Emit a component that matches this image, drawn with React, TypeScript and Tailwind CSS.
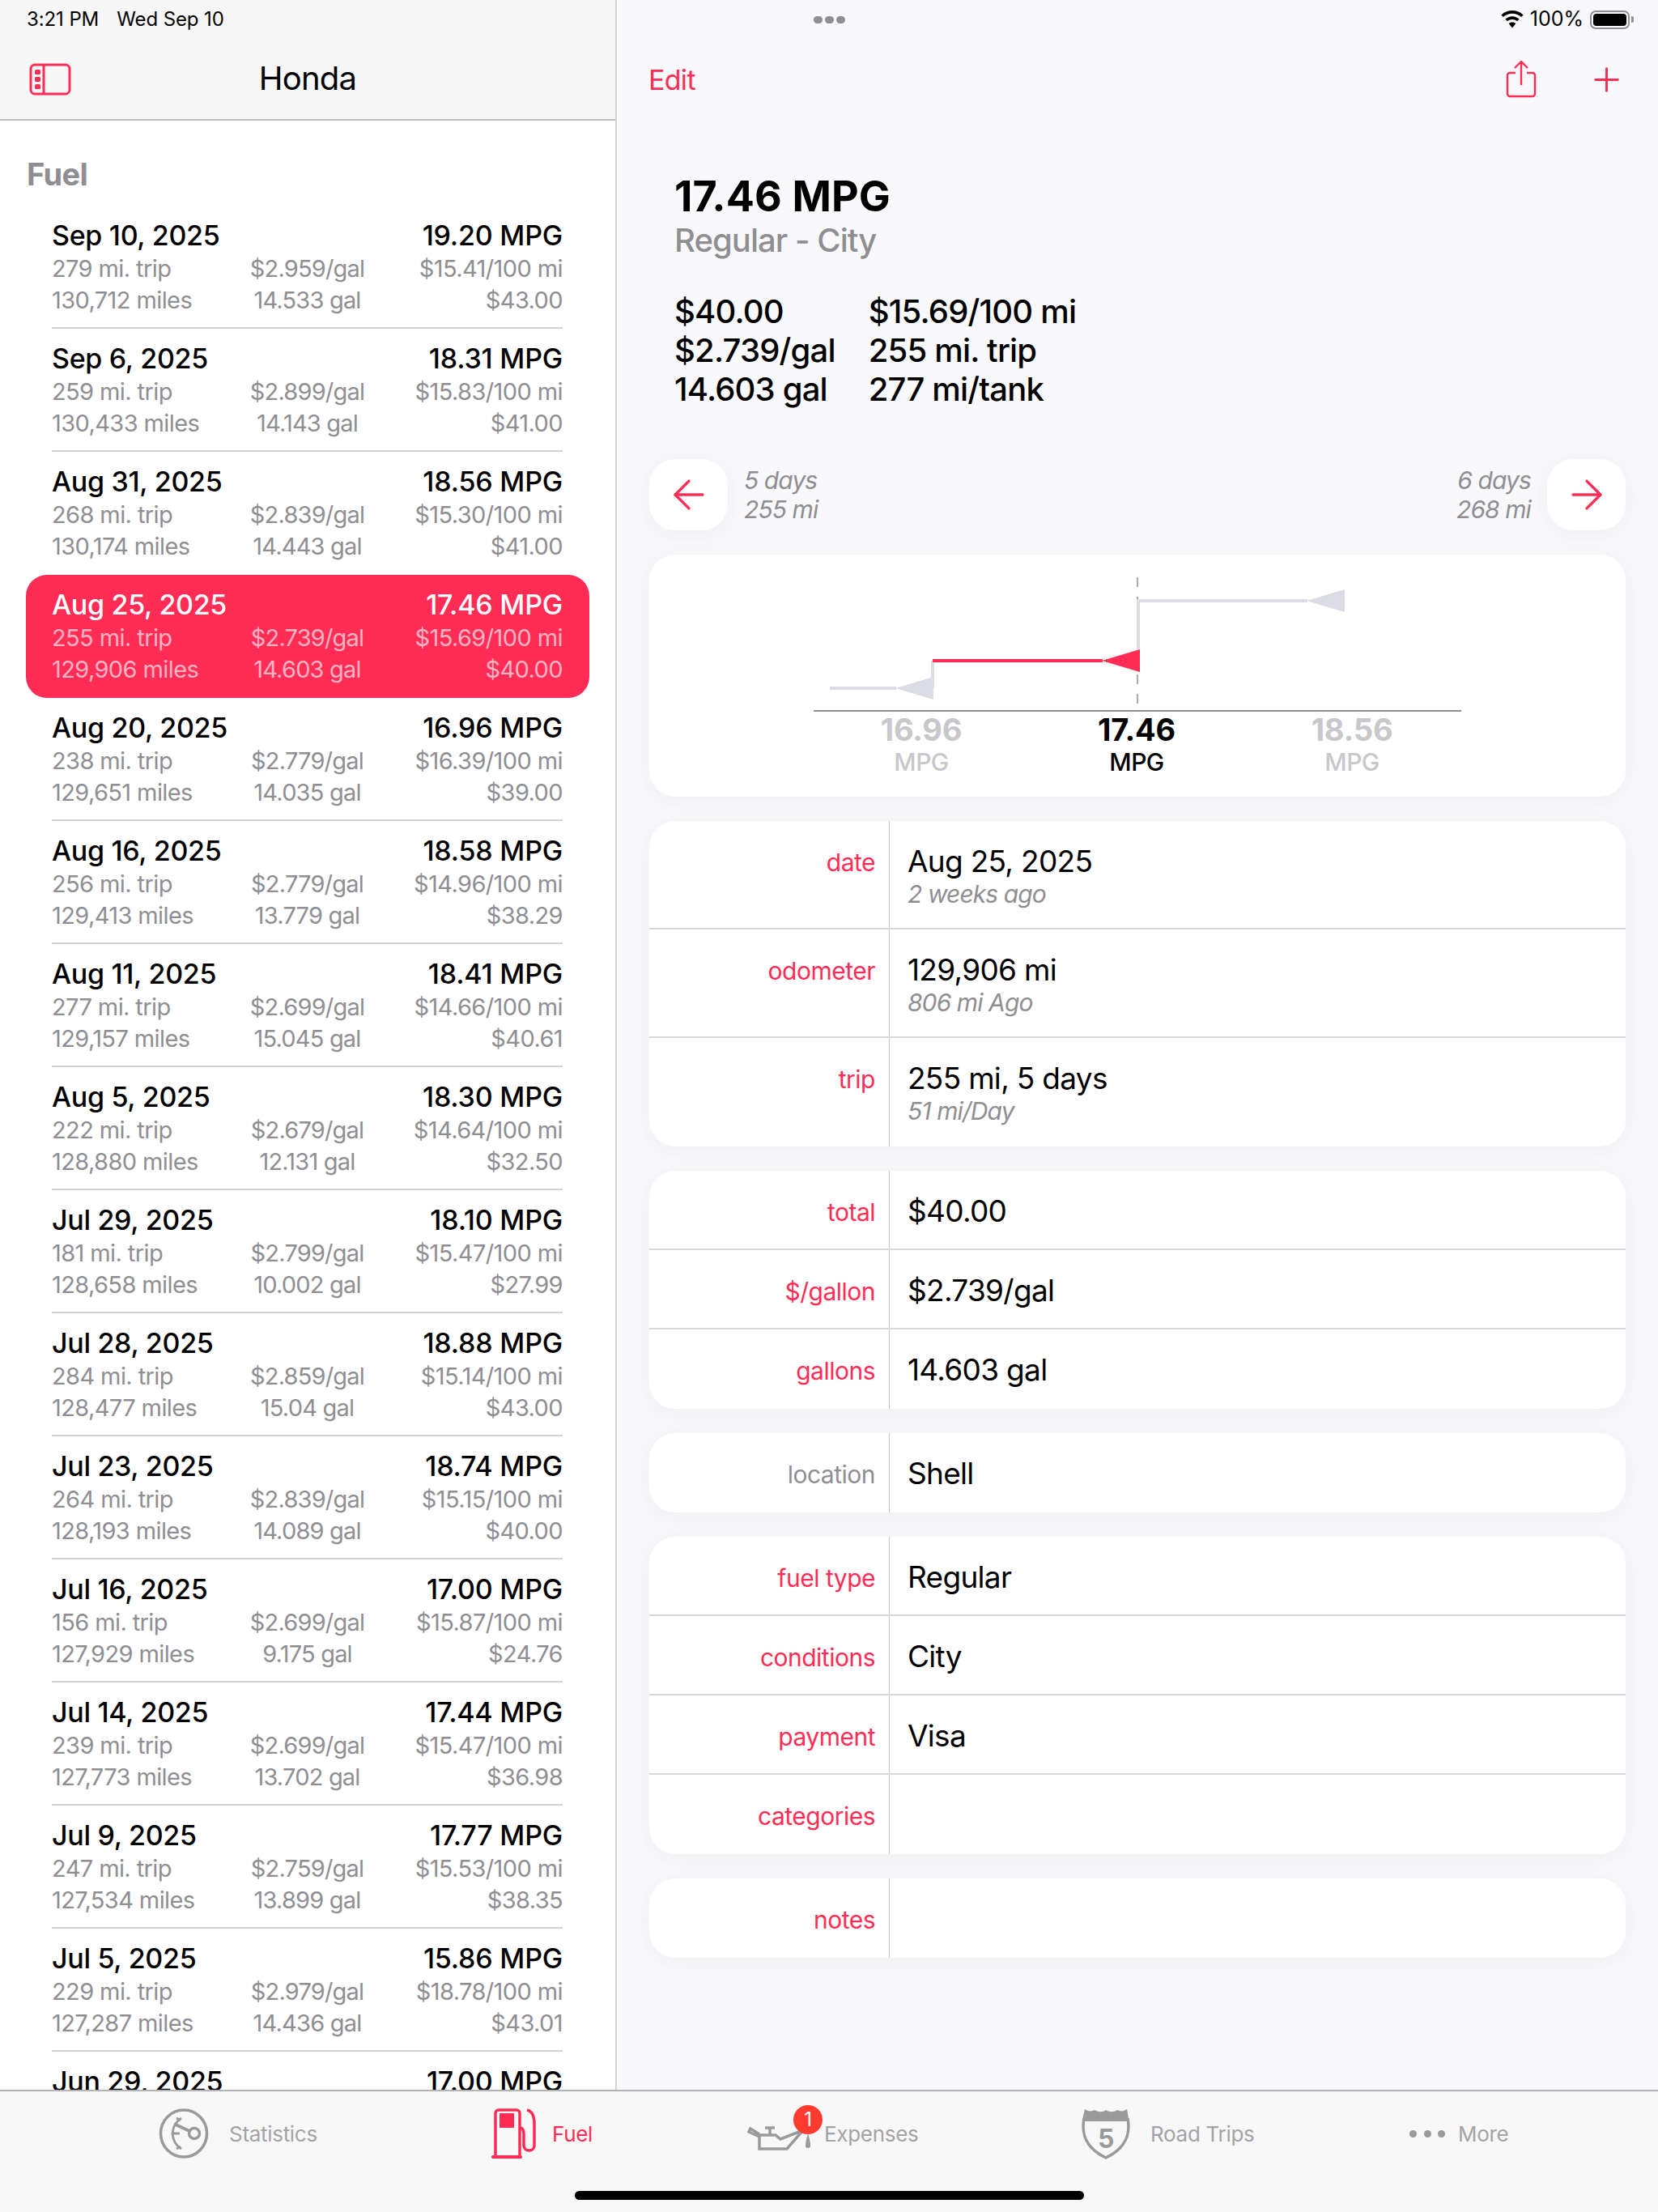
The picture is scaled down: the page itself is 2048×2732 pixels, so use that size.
import { ArrowLeft, ArrowRight, Plus } from 'lucide-react';

const rows = [
  ['Sep 10, 2025', '19.20 MPG', '279 mi. trip', '$2.959/gal', '$15.41/100 mi', '130,712 miles', '14.533 gal', '$43.00'],
  ['Sep 6, 2025', '18.31 MPG', '259 mi. trip', '$2.899/gal', '$15.83/100 mi', '130,433 miles', '14.143 gal', '$41.00'],
  ['Aug 31, 2025', '18.56 MPG', '268 mi. trip', '$2.839/gal', '$15.30/100 mi', '130,174 miles', '14.443 gal', '$41.00'],
  ['Aug 25, 2025', '17.46 MPG', '255 mi. trip', '$2.739/gal', '$15.69/100 mi', '129,906 miles', '14.603 gal', '$40.00'],
  ['Aug 20, 2025', '16.96 MPG', '238 mi. trip', '$2.779/gal', '$16.39/100 mi', '129,651 miles', '14.035 gal', '$39.00'],
  ['Aug 16, 2025', '18.58 MPG', '256 mi. trip', '$2.779/gal', '$14.96/100 mi', '129,413 miles', '13.779 gal', '$38.29'],
  ['Aug 11, 2025', '18.41 MPG', '277 mi. trip', '$2.699/gal', '$14.66/100 mi', '129,157 miles', '15.045 gal', '$40.61'],
  ['Aug 5, 2025', '18.30 MPG', '222 mi. trip', '$2.679/gal', '$14.64/100 mi', '128,880 miles', '12.131 gal', '$32.50'],
  ['Jul 29, 2025', '18.10 MPG', '181 mi. trip', '$2.799/gal', '$15.47/100 mi', '128,658 miles', '10.002 gal', '$27.99'],
  ['Jul 28, 2025', '18.88 MPG', '284 mi. trip', '$2.859/gal', '$15.14/100 mi', '128,477 miles', '15.04 gal', '$43.00'],
  ['Jul 23, 2025', '18.74 MPG', '264 mi. trip', '$2.839/gal', '$15.15/100 mi', '128,193 miles', '14.089 gal', '$40.00'],
  ['Jul 16, 2025', '17.00 MPG', '156 mi. trip', '$2.699/gal', '$15.87/100 mi', '127,929 miles', '9.175 gal', '$24.76'],
  ['Jul 14, 2025', '17.44 MPG', '239 mi. trip', '$2.699/gal', '$15.47/100 mi', '127,773 miles', '13.702 gal', '$36.98'],
  ['Jul 9, 2025', '17.77 MPG', '247 mi. trip', '$2.759/gal', '$15.53/100 mi', '127,534 miles', '13.899 gal', '$38.35'],
  ['Jul 5, 2025', '15.86 MPG', '229 mi. trip', '$2.979/gal', '$18.78/100 mi', '127,287 miles', '14.436 gal', '$43.01'],
  ['Jun 29, 2025', '17.00 MPG', '', '', '', '', '', ''],
];

const FuelRow = ({ r, selected, last }: { r: string[]; selected: boolean; last: boolean }) => {
  const sub = selected ? 'text-[#ffb3c3]' : 'text-[#8e8e93]';
  return (
    <div className={selected ? 'h-[152px] rounded-[26px] bg-[#ff2d55] pr-[33px] pl-[32px]' : 'h-[152px] pr-[33px] pl-[32px]'}>
      <div className={last || selected ? 'h-[152px] pt-[18px]' : 'h-[152px] border-b-2 border-[#d0d0d2] pt-[18px]'}>
        <div className={selected ? 'flex justify-between text-white' : 'flex justify-between text-black'}>
          <span className="text-[34px] leading-[38px] font-medium tracking-[-0.3px]">{r[0]}</span>
          <span className="text-[34px] leading-[38px] font-medium tracking-[-0.2px]">{r[1]}</span>
        </div>
        <div className={`mt-[2px] grid grid-cols-3 text-[29px] leading-[39px] tracking-[-0.6px] ${sub}`}>
          <span>{r[2]}</span>
          <span className="text-center tracking-[-0.8px] whitespace-nowrap">{r[3]}</span>
          <span className="text-right whitespace-nowrap">{r[4]}</span>
          <span className="whitespace-nowrap">{r[5]}</span>
          <span className="text-center tracking-[-0.8px] whitespace-nowrap">{r[6]}</span>
          <span className="text-right whitespace-nowrap">{r[7]}</span>
        </div>
      </div>
    </div>
  );
};

const DetailRow = ({ label, value, sub, muted, tall, last }: { label: string; value?: string; sub?: string; muted?: boolean; tall?: boolean; last?: boolean }) => (
  <div className={`flex ${tall ? 'h-[134px]' : 'h-[98px]'} ${last ? '' : 'border-b-2 border-[#d8d8dc]'}`}>
    <div className={`w-[297px] shrink-0 border-r border-[#c8c8cc] pr-[17px] text-right text-[30px] tracking-[-0.5px] ${muted ? 'text-[#8e8e93]' : 'text-[#ff2d55]'} ${tall ? 'pt-[30px] leading-[42px]' : 'pt-[3px] leading-[96px]'}`}>
      {label}
    </div>
    <div className={`pl-[22px] ${tall ? 'pt-[28px]' : 'pt-[2px]'}`}>
      <div className={`text-[37px] tracking-[-0.7px] text-black ${tall ? 'leading-[44px]' : 'leading-[96px]'}`}>{value}</div>
      {sub && <div className="text-[30px] leading-[36px] tracking-[-0.9px] text-[#8e8e93] italic">{sub}</div>}
    </div>
  </div>
);

const cardClass = 'rounded-[32px] bg-white shadow-[0_4px_24px_rgba(60,60,80,0.05)]';

const SidebarIcon = () => (
  <svg width="52" height="40" viewBox="0 0 52 40" className="text-[#ff2d55]">
    <rect x="2" y="2" width="48" height="36" rx="5" fill="none" stroke="currentColor" strokeWidth="3" />
    <path d="M18 2v36" stroke="currentColor" strokeWidth="3" />
    <rect x="7" y="8" width="7" height="6" rx="1.5" fill="currentColor" />
    <rect x="7" y="17" width="7" height="6" rx="1.5" fill="currentColor" />
    <rect x="7" y="26" width="7" height="6" rx="1.5" fill="currentColor" />
  </svg>
);

const ShareIcon = () => (
  <svg width="38" height="46" viewBox="0 0 38 46" fill="none" stroke="#ff2d55" strokeWidth="2.4">
    <path d="M12 15H5a3 3 0 0 0-3 3v23a3 3 0 0 0 3 3h28a3 3 0 0 0 3-3V18a3 3 0 0 0-3-3h-7" />
    <path d="M19 30V2M11 9l8-8 8 8" />
  </svg>
);

const WifiIcon = () => (
  <svg width="28" height="22" viewBox="0 0 28 22" fill="black">
    <path d="M14 0C8.7 0 4 2 .4 5.4l2.5 2.7C5.8 5.4 9.7 3.7 14 3.7s8.2 1.7 11.1 4.4l2.5-2.7C24 2 19.3 0 14 0z" />
    <path d="M14 7.2c-3.3 0-6.3 1.3-8.6 3.4l2.6 2.7c1.6-1.4 3.7-2.3 6-2.3s4.4.9 6 2.3l2.6-2.7c-2.3-2.1-5.3-3.4-8.6-3.4z" />
    <path d="M14 14.4c-1.7 0-3.2.6-4.4 1.6L14 21.6l4.4-5.6c-1.2-1-2.7-1.6-4.4-1.6z" />
  </svg>
);

const Battery = () => (
  <div className="flex items-center gap-[2px]">
    <div className="flex h-[23px] w-[49px] items-center rounded-[7px] border-2 border-[#8e8e93] p-[2px]">
      <div className="h-full w-full rounded-[4px] bg-black" />
    </div>
    <div className="h-[8px] w-[3px] rounded-r-[2px] bg-[#8e8e93]" />
  </div>
);

const GaugeIcon = () => (
  <svg width="62" height="62" viewBox="0 0 62 62" fill="none" stroke="#9a9a9a" strokeWidth="3.5">
    <ellipse cx="31" cy="31" rx="28.5" ry="29" />
    <path d="M28 12Q18 18 17 31Q18 44 28 50" strokeWidth="3" />
    <path d="M17 31h9M22 12l5 3M22 50l5-3" strokeWidth="3" />
    <path d="M21 20l17 8" strokeWidth="4" strokeLinecap="round" />
    <circle cx="44" cy="31" r="6.5" />
  </svg>
);

const PumpIcon = () => (
  <svg width="56" height="62" viewBox="0 0 56 62" fill="none" stroke="#ff2d55" strokeWidth="3.5">
    <path d="M5 58V6a4 4 0 0 1 4-4h22a4 4 0 0 1 4 4v52" />
    <path d="M2 60h34" strokeWidth="4" strokeLinecap="round" />
    <rect x="10" y="6" width="18" height="18" rx="1" fill="#ff2d55" stroke="none" />
    <path d="M35 24c4 0 5 3 5 8v14c0 8 13 8 13 0V18c0-4 0-4-1-7-1-5-4-8-8-9" />
  </svg>
);

const OilIcon = () => (
  <svg width="84" height="30" viewBox="0 0 84 30" fill="none" stroke="#9a9a9a" strokeWidth="3.5">
    <path d="M16 28V11h20l6 5L70 5 50 28z" />
    <path d="M16 13 3 7l2-4 11 7" />
    <path d="M29 10V3M23 2h12" />
    <path d="M76 9c-2 7-3 11-3 15a3 3 0 0 0 6 0c0-4-1-8-3-15z" fill="#9a9a9a" stroke="none" />
  </svg>
);

const ShieldIcon = () => (
  <svg width="62" height="64" viewBox="0 0 62 64" fill="none">
    <path d="M4 13c-4 22 4 38 27 49 23-11 31-27 27-49" stroke="#9a9a9a" strokeWidth="3.5" />
    <path d="M5 2c4 3 8 3 12 1 5 3 10 3 14 0 5 3 9 3 14 0 4 2 8 2 12-1 1 5 2 10 2 15H2c0-5 2-10 3-15z" fill="#9a9a9a" />
    <text x="31" y="50" textAnchor="middle" fontSize="32" fontWeight="700" fontFamily="Inter, sans-serif" fill="#9a9a9a">5</text>
  </svg>
);

const App = () => {
  return (
    <div className="flex h-[2732px] w-[2048px] flex-col overflow-hidden bg-white [font-family:Inter,sans-serif]">
      <div className="flex min-h-0 flex-1">
        <aside className="flex w-[762px] shrink-0 flex-col border-r-2 border-[#d4d4d6]">
          <div className="h-[149px] shrink-0 border-b-2 border-[#bdbdbf] bg-[#f7f7f7]">
            <div className="flex h-[48px] items-center gap-[22px] pl-[33px] text-[24px] tracking-[-0.1px] text-black">
              <span>3:21 PM</span>
              <span>Wed Sep 10</span>
            </div>
            <div className="relative flex h-[98px] items-center justify-center">
              <div className="absolute top-[30px] left-[36px]"><SidebarIcon /></div>
              <span className="text-[40px] tracking-[-0.8px] text-black">Honda</span>
            </div>
          </div>
          <div className="px-[32px]">
            <div className="pt-[46px] pl-[1px] text-[38px] leading-[40px] font-bold tracking-[-0.6px] text-[#8e8e93]">Fuel</div>
            <div className="mt-[19px]">
              {rows.map((r, i) => (
                <FuelRow key={r[0]} r={r} selected={i === 3} last={i === 2 || i === 3} />
              ))}
            </div>
          </div>
        </aside>

        <main className="min-w-0 flex-1 bg-[#f9f9fb] px-[40px]">
          <div className="relative -mr-[10px] flex h-[48px] items-center justify-end gap-[8px] text-[25px] text-black">
            <div className="absolute top-[20px] left-[203px] flex gap-[3px]">
              <span className="h-[9px] w-[11px] rounded-full bg-[#8e8e93]" />
              <span className="h-[9px] w-[11px] rounded-full bg-[#8e8e93]" />
              <span className="h-[9px] w-[11px] rounded-full bg-[#8e8e93]" />
            </div>
            <WifiIcon />
            <span>100%</span>
            <Battery />
          </div>
          <div className="flex h-[100px] items-center justify-between">
            <span className="-ml-[1px] text-[34px] tracking-[-0.7px] text-[#ff2d55]">Edit</span>
            <div className="flex items-center gap-[63px]">
              <ShareIcon />
              <Plus size={47} strokeWidth={1.5} color="#ff2d55" />
            </div>
          </div>
          <div className="pt-[65px] pl-[31px]">
            <div className="text-[52px] leading-[60px] font-bold tracking-[0.1px] text-black">17.46 MPG</div>
            <div className="text-[40px] leading-[47px] font-medium tracking-[-0.95px] text-[#8e8e93]">Regular - City</div>
            <div className="mt-[41px] grid w-fit grid-cols-[auto_auto] gap-x-[41px] text-[40px] leading-[48px] font-medium tracking-[-0.8px] text-black">
              <span>$40.00</span>
              <span>$15.69/100 mi</span>
              <span>$2.739/gal</span>
              <span>255 mi. trip</span>
              <span>14.603 gal</span>
              <span>277 mi/tank</span>
            </div>
          </div>

          <div className="mt-[62px] flex h-[88px] items-center justify-between">
            <div className="flex items-center gap-[20px]">
              <div className={`flex h-[88px] w-[97px] items-center justify-center ${cardClass}`}>
                <ArrowLeft size={58} strokeWidth={1.4} color="#ff2d55" />
              </div>
              <div className="text-[30px] leading-[36px] tracking-[-0.9px] text-[#8e8e93] italic">
                <div>5 days</div>
                <div>255 mi</div>
              </div>
            </div>
            <div className="flex items-center gap-[20px]">
              <div className="text-right text-[30px] leading-[36px] tracking-[-0.9px] text-[#8e8e93] italic">
                <div>6 days</div>
                <div>268 mi</div>
              </div>
              <div className={`flex h-[88px] w-[97px] items-center justify-center ${cardClass}`}>
                <ArrowRight size={58} strokeWidth={1.4} color="#ff2d55" />
              </div>
            </div>
          </div>

          <div className={`mt-[30px] h-[299px] ${cardClass}`}>
            <svg width="1206" height="194" viewBox="0 0 1206 194" className="block">
              <path d="M603 28v156" stroke="#8e8e93" strokeWidth="1.5" strokeDasharray="12 12" />
              <path d="M223 165h82M350 165V131" stroke="#dcdce6" strokeWidth="4" fill="none" />
              <path d="M304 165l47-14v28z" fill="#dcdce6" />
              <path d="M604 117V57h209" stroke="#dcdce6" strokeWidth="4" fill="none" />
              <path d="M812 57l47-14v28z" fill="#dcdce6" />
              <path d="M350 131h210" stroke="#ff2d55" strokeWidth="4" fill="none" />
              <path d="M559 131l47-14v28z" fill="#ff2d55" />
              <path d="M203 193h800" stroke="#8e8e93" strokeWidth="2" />
            </svg>
            <div className="-ml-[2px] flex justify-center text-center text-[#c7c7cc]">
              <div className="w-[266px]">
                <div className="text-[38px] leading-[44px] font-bold tracking-[-0.2px]">16.96</div>
                <div className="text-[30px] leading-[36px] font-medium tracking-[-0.6px]">MPG</div>
              </div>
              <div className="w-[266px] text-black">
                <div className="text-[38px] leading-[44px] font-bold tracking-[-0.2px]">17.46</div>
                <div className="text-[30px] leading-[36px] font-medium tracking-[-0.6px]">MPG</div>
              </div>
              <div className="w-[266px]">
                <div className="text-[38px] leading-[44px] font-bold tracking-[-0.2px]">18.56</div>
                <div className="text-[30px] leading-[36px] font-medium tracking-[-0.6px]">MPG</div>
              </div>
            </div>
          </div>

          <div className={`mt-[30px] overflow-hidden ${cardClass}`}>
            <DetailRow tall label="date" value="Aug 25, 2025" sub="2 weeks ago" />
            <DetailRow tall label="odometer" value="129,906 mi" sub="806 mi Ago" />
            <DetailRow tall last label="trip" value="255 mi, 5 days" sub="51 mi/Day" />
          </div>
          <div className={`mt-[30px] overflow-hidden ${cardClass}`}>
            <DetailRow label="total" value="$40.00" />
            <DetailRow label="$/gallon" value="$2.739/gal" />
            <DetailRow last label="gallons" value="14.603 gal" />
          </div>
          <div className={`mt-[30px] overflow-hidden ${cardClass}`}>
            <DetailRow last muted label="location" value="Shell" />
          </div>
          <div className={`mt-[30px] overflow-hidden ${cardClass}`}>
            <DetailRow label="fuel type" value="Regular" />
            <DetailRow label="conditions" value="City" />
            <DetailRow label="payment" value="Visa" />
            <DetailRow last label="categories" />
          </div>
          <div className={`mt-[30px] overflow-hidden ${cardClass}`}>
            <DetailRow last label="notes" />
          </div>
        </main>
      </div>

      <div className="relative h-[151px] shrink-0 border-t-2 border-[#b4b4b6] bg-[#f8f8f9] text-[26px] tracking-[-0.3px] text-[#a3a3a6]">
        <div className="box-content grid h-[64px] grid-cols-[411px_315px_413px_406px_1fr] items-center pt-[20px] pl-[196px]">
          <div className="flex items-center gap-[25px]">
            <GaugeIcon />
            <span>Statistics</span>
          </div>
          <div className="flex items-center gap-[19px] text-[#ff2d55]">
            <PumpIcon />
            <span>Fuel</span>
          </div>
          <div className="relative flex items-center gap-[12px]">
            <div className="pt-[12px]"><OilIcon /></div>
            <span>Expenses</span>
            <div className="absolute top-[-14px] left-[58px] flex h-[36px] w-[36px] items-center justify-center rounded-full bg-[#ff3b30] text-[24px] text-white">1</div>
          </div>
          <div className="flex items-center gap-[24px]">
            <ShieldIcon />
            <span>Road Trips</span>
          </div>
          <div className="flex items-center gap-[16px]">
            <div className="flex w-[44px] justify-between">
              <span className="h-[9px] w-[9px] rounded-full bg-[#9a9a9a]" />
              <span className="h-[9px] w-[9px] rounded-full bg-[#9a9a9a]" />
              <span className="h-[9px] w-[9px] rounded-full bg-[#9a9a9a]" />
            </div>
            <span>More</span>
          </div>
        </div>
        <div className="absolute top-[123px] left-[710px] h-[11px] w-[629px] rounded-full bg-black" />
      </div>
    </div>
  );
};

export default App;
